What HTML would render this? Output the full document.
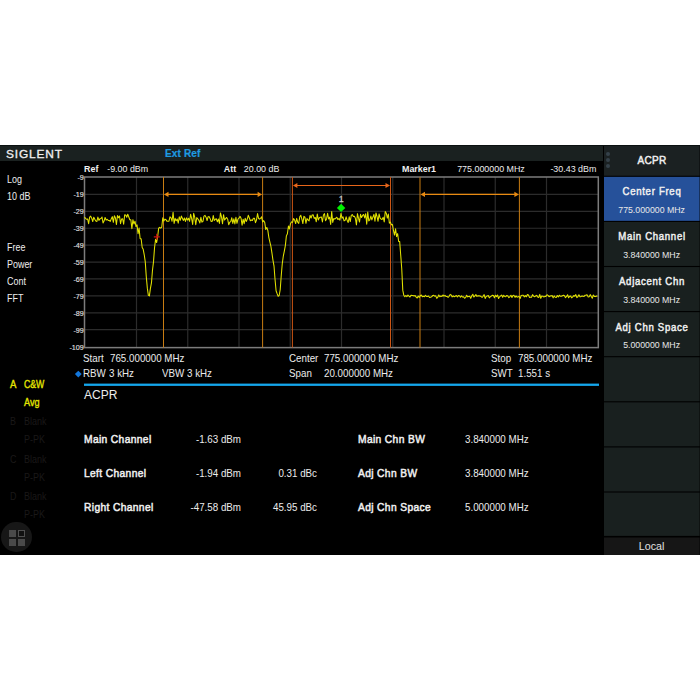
<!DOCTYPE html>
<html><head><meta charset="utf-8"><style>
html,body{margin:0;padding:0;background:#fff;width:700px;height:700px;overflow:hidden;position:relative}
.t{position:absolute;white-space:nowrap;font-family:"Liberation Sans", sans-serif}
</style></head><body>
<div style="position:absolute;left:0px;top:145px;width:700px;height:410px;background:#000;"></div>
<div style="position:absolute;left:0px;top:145px;width:603px;height:15.6px;background:#1a2120;"></div>
<div class="t" style="left:5.70px;top:148.65px;font-size:11.4px;line-height:11.4px;color:#f0f0f0;font-weight:normal;letter-spacing:0.8px;-webkit-text-stroke:0.3px #f0f0f0;transform:scaleX(1.045);transform-origin:0 0;">SIGLENT</div>
<div class="t" style="left:165.00px;top:148.11px;font-size:10.8px;line-height:10.8px;color:#1e9be2;font-weight:bold;letter-spacing:0.15px;-webkit-text-stroke:0.2px #1e9be2;transform:scaleX(0.93);transform-origin:0 0;">Ext Ref</div>
<svg style="position:absolute;left:0;top:0" width="700" height="700">
<rect x="604" y="145" width="95.6" height="30.75" fill="#1b2122"/>
<rect x="604" y="176.85" width="95.6" height="44.00" fill="#26519a"/>
<rect x="604" y="221.95" width="95.6" height="44.00" fill="#19201f"/>
<rect x="604" y="267.05" width="95.6" height="44.00" fill="#19201f"/>
<rect x="604" y="312.15" width="95.6" height="44.00" fill="#19201f"/>
<rect x="604" y="357.25" width="95.6" height="44.00" fill="#19201f"/>
<rect x="604" y="402.35" width="95.6" height="44.00" fill="#19201f"/>
<rect x="604" y="447.45" width="95.6" height="44.00" fill="#19201f"/>
<rect x="604" y="492.55" width="95.6" height="43.35" fill="#19201f"/>
<rect x="604" y="537.5" width="95.6" height="17.5" fill="#161616"/>
<rect x="0" y="145" width="700" height="1" fill="#0b1111"/>
</svg>
<div style="position:absolute;left:606.10px;top:151.60px;width:4.4px;height:4.4px;border-radius:50%;background:#35414a"></div>
<div style="position:absolute;left:606.10px;top:157.80px;width:4.4px;height:4.4px;border-radius:50%;background:#35414a"></div>
<div style="position:absolute;left:606.10px;top:163.80px;width:4.4px;height:4.4px;border-radius:50%;background:#35414a"></div>
<div class="t" style="left:451.60px;width:400px;text-align:center;top:156.20px;font-size:10.4px;line-height:10.4px;color:#f0f0f0;font-weight:normal;letter-spacing:0.3px;-webkit-text-stroke:0.45px #f0f0f0;transform:scaleX(0.97);transform-origin:200px 0;">ACPR</div>
<div class="t" style="left:451.60px;width:400px;text-align:center;top:187.27px;font-size:10.2px;line-height:10.2px;color:#f0f0f0;font-weight:normal;letter-spacing:0.75px;-webkit-text-stroke:0.45px #f0f0f0;transform:scaleX(0.94);transform-origin:200px 0;">Center Freq</div>
<div class="t" style="left:451.60px;width:400px;text-align:center;top:205.59px;font-size:8.75px;line-height:8.75px;color:#e8e8e8;font-weight:normal;">775.000000 MHz</div>
<div class="t" style="left:451.60px;width:400px;text-align:center;top:232.37px;font-size:10.2px;line-height:10.2px;color:#f0f0f0;font-weight:normal;letter-spacing:0.75px;-webkit-text-stroke:0.45px #f0f0f0;transform:scaleX(0.94);transform-origin:200px 0;">Main Channel</div>
<div class="t" style="left:451.60px;width:400px;text-align:center;top:250.69px;font-size:8.75px;line-height:8.75px;color:#e8e8e8;font-weight:normal;">3.840000 MHz</div>
<div class="t" style="left:451.60px;width:400px;text-align:center;top:277.47px;font-size:10.2px;line-height:10.2px;color:#f0f0f0;font-weight:normal;letter-spacing:0.75px;-webkit-text-stroke:0.45px #f0f0f0;transform:scaleX(0.94);transform-origin:200px 0;">Adjacent Chn</div>
<div class="t" style="left:451.60px;width:400px;text-align:center;top:295.79px;font-size:8.75px;line-height:8.75px;color:#e8e8e8;font-weight:normal;">3.840000 MHz</div>
<div class="t" style="left:451.60px;width:400px;text-align:center;top:322.57px;font-size:10.2px;line-height:10.2px;color:#f0f0f0;font-weight:normal;letter-spacing:0.75px;-webkit-text-stroke:0.45px #f0f0f0;transform:scaleX(0.94);transform-origin:200px 0;">Adj Chn Space</div>
<div class="t" style="left:451.60px;width:400px;text-align:center;top:340.89px;font-size:8.75px;line-height:8.75px;color:#e8e8e8;font-weight:normal;">5.000000 MHz</div>
<div class="t" style="left:451.60px;width:400px;text-align:center;top:540.94px;font-size:10.7px;line-height:10.7px;color:#e0e0e0;font-weight:normal;">Local</div>
<div class="t" style="left:6.60px;top:175.10px;font-size:10.4px;line-height:10.4px;color:#eeeeee;font-weight:normal;transform:scaleX(0.86);transform-origin:0 0;">Log</div>
<div class="t" style="left:6.60px;top:191.50px;font-size:10.4px;line-height:10.4px;color:#eeeeee;font-weight:normal;transform:scaleX(0.86);transform-origin:0 0;">10 dB</div>
<div class="t" style="left:6.60px;top:243.10px;font-size:10.4px;line-height:10.4px;color:#eeeeee;font-weight:normal;transform:scaleX(0.86);transform-origin:0 0;">Free</div>
<div class="t" style="left:6.60px;top:259.90px;font-size:10.4px;line-height:10.4px;color:#eeeeee;font-weight:normal;transform:scaleX(0.86);transform-origin:0 0;">Power</div>
<div class="t" style="left:6.60px;top:276.80px;font-size:10.4px;line-height:10.4px;color:#eeeeee;font-weight:normal;transform:scaleX(0.86);transform-origin:0 0;">Cont</div>
<div class="t" style="left:6.60px;top:294.00px;font-size:10.4px;line-height:10.4px;color:#eeeeee;font-weight:normal;transform:scaleX(0.86);transform-origin:0 0;">FFT</div>
<div class="t" style="left:9.90px;top:378.83px;font-size:10.6px;line-height:10.6px;color:#e6e600;font-weight:normal;-webkit-text-stroke:0.35px #e6e600;transform:scaleX(0.9);transform-origin:0 0;">A</div>
<div class="t" style="left:23.80px;top:378.83px;font-size:10.6px;line-height:10.6px;color:#e6e600;font-weight:normal;-webkit-text-stroke:0.35px #e6e600;transform:scaleX(0.82);transform-origin:0 0;">C&amp;W</div>
<div class="t" style="left:23.80px;top:396.53px;font-size:10.6px;line-height:10.6px;color:#e6e600;font-weight:normal;-webkit-text-stroke:0.35px #e6e600;transform:scaleX(0.86);transform-origin:0 0;">Avg</div>
<div class="t" style="left:10.20px;top:417.20px;font-size:10.4px;line-height:10.4px;color:#1a1818;font-weight:normal;transform:scaleX(0.86);transform-origin:0 0;">B</div>
<div class="t" style="left:23.80px;top:417.20px;font-size:10.4px;line-height:10.4px;color:#1a1818;font-weight:normal;transform:scaleX(0.86);transform-origin:0 0;">Blank</div>
<div class="t" style="left:23.80px;top:435.00px;font-size:10.4px;line-height:10.4px;color:#1a1818;font-weight:normal;transform:scaleX(0.86);transform-origin:0 0;">P-PK</div>
<div class="t" style="left:10.20px;top:454.70px;font-size:10.4px;line-height:10.4px;color:#1a1818;font-weight:normal;transform:scaleX(0.86);transform-origin:0 0;">C</div>
<div class="t" style="left:23.80px;top:454.70px;font-size:10.4px;line-height:10.4px;color:#1a1818;font-weight:normal;transform:scaleX(0.86);transform-origin:0 0;">Blank</div>
<div class="t" style="left:23.80px;top:472.50px;font-size:10.4px;line-height:10.4px;color:#1a1818;font-weight:normal;transform:scaleX(0.86);transform-origin:0 0;">P-PK</div>
<div class="t" style="left:10.20px;top:492.30px;font-size:10.4px;line-height:10.4px;color:#1a1818;font-weight:normal;transform:scaleX(0.86);transform-origin:0 0;">D</div>
<div class="t" style="left:23.80px;top:492.30px;font-size:10.4px;line-height:10.4px;color:#1a1818;font-weight:normal;transform:scaleX(0.86);transform-origin:0 0;">Blank</div>
<div class="t" style="left:23.80px;top:510.10px;font-size:10.4px;line-height:10.4px;color:#1a1818;font-weight:normal;transform:scaleX(0.86);transform-origin:0 0;">P-PK</div>
<div style="position:absolute;left:1.4px;top:522.1px;width:30.4px;height:30.4px;border-radius:50%;background:#171717"></div>
<div style="position:absolute;left:8.9px;top:529.9px;width:7px;height:7px;background:#4a4a4a"></div>
<div style="position:absolute;left:18.3px;top:529.9px;width:4.8px;height:4.8px;border:1.1px solid #505050;background:#111"></div>
<div style="position:absolute;left:8.9px;top:539.1px;width:7px;height:7px;background:#4a4a4a"></div>
<div style="position:absolute;left:18.4px;top:539.1px;width:7px;height:7px;background:#4a4a4a"></div>
<div class="t" style="left:84.10px;top:164.57px;font-size:8.9px;line-height:8.9px;color:#f0f0f0;font-weight:bold;">Ref</div>
<div class="t" style="left:107.20px;top:164.57px;font-size:8.9px;line-height:8.9px;color:#ececec;font-weight:normal;">-9.00 dBm</div>
<div class="t" style="left:223.80px;top:164.57px;font-size:8.9px;line-height:8.9px;color:#f0f0f0;font-weight:bold;">Att</div>
<div class="t" style="left:243.80px;top:164.57px;font-size:8.9px;line-height:8.9px;color:#ececec;font-weight:normal;">20.00 dB</div>
<div class="t" style="left:402.00px;top:164.57px;font-size:8.9px;line-height:8.9px;color:#f0f0f0;font-weight:bold;">Marker1</div>
<div class="t" style="left:457.20px;top:164.57px;font-size:8.9px;line-height:8.9px;color:#ececec;font-weight:normal;">775.000000 MHz</div>
<div class="t" style="left:196.30px;width:400px;text-align:right;top:164.57px;font-size:8.9px;line-height:8.9px;color:#ececec;font-weight:normal;">-30.43 dBm</div>
<svg style="position:absolute;left:0;top:0" width="700" height="700">
<line x1="136.50" y1="177.0" x2="136.50" y2="347.6" stroke="#2c2c2c" stroke-width="1.2"/>
<line x1="84.5" y1="194.41" x2="598.3" y2="194.41" stroke="#2c2c2c" stroke-width="1.2"/>
<line x1="187.75" y1="177.0" x2="187.75" y2="347.6" stroke="#2c2c2c" stroke-width="1.2"/>
<line x1="84.5" y1="211.32" x2="598.3" y2="211.32" stroke="#2c2c2c" stroke-width="1.2"/>
<line x1="239.00" y1="177.0" x2="239.00" y2="347.6" stroke="#2c2c2c" stroke-width="1.2"/>
<line x1="84.5" y1="228.23" x2="598.3" y2="228.23" stroke="#2c2c2c" stroke-width="1.2"/>
<line x1="290.25" y1="177.0" x2="290.25" y2="347.6" stroke="#2c2c2c" stroke-width="1.2"/>
<line x1="84.5" y1="245.14" x2="598.3" y2="245.14" stroke="#2c2c2c" stroke-width="1.2"/>
<line x1="341.50" y1="177.0" x2="341.50" y2="347.6" stroke="#2c2c2c" stroke-width="1.2"/>
<line x1="84.5" y1="262.05" x2="598.3" y2="262.05" stroke="#2c2c2c" stroke-width="1.2"/>
<line x1="392.75" y1="177.0" x2="392.75" y2="347.6" stroke="#2c2c2c" stroke-width="1.2"/>
<line x1="84.5" y1="278.96" x2="598.3" y2="278.96" stroke="#2c2c2c" stroke-width="1.2"/>
<line x1="444.00" y1="177.0" x2="444.00" y2="347.6" stroke="#2c2c2c" stroke-width="1.2"/>
<line x1="84.5" y1="295.87" x2="598.3" y2="295.87" stroke="#2c2c2c" stroke-width="1.2"/>
<line x1="495.25" y1="177.0" x2="495.25" y2="347.6" stroke="#2c2c2c" stroke-width="1.2"/>
<line x1="84.5" y1="312.78" x2="598.3" y2="312.78" stroke="#2c2c2c" stroke-width="1.2"/>
<line x1="546.50" y1="177.0" x2="546.50" y2="347.6" stroke="#2c2c2c" stroke-width="1.2"/>
<line x1="84.5" y1="329.69" x2="598.3" y2="329.69" stroke="#2c2c2c" stroke-width="1.2"/>
<rect x="84.5" y="177.0" width="513.8" height="170.60000000000002" fill="none" stroke="#7c7c7c" stroke-width="1.5"/>
<text x="83.8" y="179.50" text-anchor="end" font-family='"Liberation Sans", sans-serif' font-size="7.2" fill="#e0e0e0" stroke="#e0e0e0" stroke-width="0.12">-9</text>
<text x="83.8" y="196.54" text-anchor="end" font-family='"Liberation Sans", sans-serif' font-size="7.2" fill="#e0e0e0" stroke="#e0e0e0" stroke-width="0.12">-19</text>
<text x="83.8" y="213.58" text-anchor="end" font-family='"Liberation Sans", sans-serif' font-size="7.2" fill="#e0e0e0" stroke="#e0e0e0" stroke-width="0.12">-29</text>
<text x="83.8" y="230.62" text-anchor="end" font-family='"Liberation Sans", sans-serif' font-size="7.2" fill="#e0e0e0" stroke="#e0e0e0" stroke-width="0.12">-39</text>
<text x="83.8" y="247.66" text-anchor="end" font-family='"Liberation Sans", sans-serif' font-size="7.2" fill="#e0e0e0" stroke="#e0e0e0" stroke-width="0.12">-49</text>
<text x="83.8" y="264.70" text-anchor="end" font-family='"Liberation Sans", sans-serif' font-size="7.2" fill="#e0e0e0" stroke="#e0e0e0" stroke-width="0.12">-59</text>
<text x="83.8" y="281.74" text-anchor="end" font-family='"Liberation Sans", sans-serif' font-size="7.2" fill="#e0e0e0" stroke="#e0e0e0" stroke-width="0.12">-69</text>
<text x="83.8" y="298.78" text-anchor="end" font-family='"Liberation Sans", sans-serif' font-size="7.2" fill="#e0e0e0" stroke="#e0e0e0" stroke-width="0.12">-79</text>
<text x="83.8" y="315.82" text-anchor="end" font-family='"Liberation Sans", sans-serif' font-size="7.2" fill="#e0e0e0" stroke="#e0e0e0" stroke-width="0.12">-89</text>
<text x="83.8" y="332.86" text-anchor="end" font-family='"Liberation Sans", sans-serif' font-size="7.2" fill="#e0e0e0" stroke="#e0e0e0" stroke-width="0.12">-99</text>
<text x="83.8" y="349.90" text-anchor="end" font-family='"Liberation Sans", sans-serif' font-size="7.2" fill="#e0e0e0" stroke="#e0e0e0" stroke-width="0.12">-109</text>
<line x1="163.5" y1="177.0" x2="163.5" y2="347.6" stroke="#c87c12" stroke-width="1.0"/>
<line x1="262.6" y1="177.0" x2="262.6" y2="347.6" stroke="#c87c12" stroke-width="1.0"/>
<line x1="292.4" y1="177.0" x2="292.4" y2="347.6" stroke="#cc5614" stroke-width="1.0"/>
<line x1="390.5" y1="177.0" x2="390.5" y2="347.6" stroke="#cc5614" stroke-width="1.0"/>
<line x1="420.0" y1="177.0" x2="420.0" y2="347.6" stroke="#c87c12" stroke-width="1.0"/>
<line x1="519.4" y1="177.0" x2="519.4" y2="347.6" stroke="#c87c12" stroke-width="1.0"/>
<line x1="166.5" y1="194.4" x2="259.6" y2="194.4" stroke="#e88a12" stroke-width="1.2"/>
<path d="M164.0,194.4 L168.5,191.8 L168.5,197.0 Z" fill="#e88a12"/>
<path d="M262.1,194.4 L257.6,191.8 L257.6,197.0 Z" fill="#e88a12"/>
<line x1="295.4" y1="185.5" x2="387.5" y2="185.5" stroke="#e8661a" stroke-width="1.2"/>
<path d="M292.9,185.5 L297.4,182.9 L297.4,188.1 Z" fill="#e8661a"/>
<path d="M390.0,185.5 L385.5,182.9 L385.5,188.1 Z" fill="#e8661a"/>
<line x1="423.0" y1="194.4" x2="516.4" y2="194.4" stroke="#e88a12" stroke-width="1.2"/>
<path d="M420.5,194.4 L425.0,191.8 L425.0,197.0 Z" fill="#e88a12"/>
<path d="M518.9,194.4 L514.4,191.8 L514.4,197.0 Z" fill="#e88a12"/>
<polyline points="84.50,216.94 85.53,218.42 86.56,219.30 87.59,218.96 88.62,223.75 89.65,217.09 90.68,216.17 91.71,218.21 92.74,221.57 93.77,217.23 94.80,219.30 95.83,221.11 96.86,221.49 97.89,217.05 98.92,220.37 99.95,218.86 100.98,218.48 102.01,216.98 103.04,222.97 104.07,221.09 105.10,217.42 106.13,220.09 107.16,219.23 108.19,220.46 109.22,220.52 110.25,221.36 111.28,218.83 112.31,216.63 113.34,222.33 114.37,215.83 115.40,217.71 116.43,224.55 117.46,215.59 118.49,217.77 119.52,215.99 120.55,223.74 121.58,219.01 122.61,218.77 123.64,224.11 124.67,214.89 125.70,214.98 126.73,217.28 127.76,214.26 128.79,217.00 129.82,219.71 130.85,219.83 131.88,228.81 132.91,219.68 133.94,223.97 134.97,221.18 136.00,226.58 137.03,224.83 138.06,233.72 139.09,228.06 140.12,238.76 141.15,238.70 142.18,247.54 143.21,249.28 144.24,254.78 145.27,261.90 146.30,276.89 147.33,288.13 148.36,295.38 149.39,295.90 150.42,288.41 151.45,282.96 152.48,270.30 153.51,261.64 154.54,247.75 155.57,239.26 156.60,242.54 157.63,236.86 158.66,228.18 159.69,227.29 160.72,228.19 161.75,227.08 162.78,217.73 163.81,221.12 164.84,219.16 165.87,219.60 166.90,221.15 167.93,221.28 168.96,221.14 169.99,216.88 171.02,217.96 172.05,221.23 173.08,212.30 174.11,223.40 175.14,218.34 176.17,220.83 177.20,218.95 178.23,223.10 179.26,216.79 180.29,220.32 181.32,216.01 182.35,218.23 183.38,220.41 184.41,217.98 185.44,221.38 186.47,217.87 187.50,220.09 188.53,218.21 189.56,221.31 190.59,214.21 191.62,218.30 192.65,224.51 193.68,213.29 194.71,217.23 195.74,224.80 196.77,217.64 197.80,218.78 198.83,220.36 199.86,222.94 200.89,217.35 201.92,222.22 202.95,221.37 203.98,216.17 205.01,215.40 206.04,217.20 207.07,220.54 208.10,216.75 209.13,216.63 210.16,218.68 211.19,221.53 212.22,221.29 213.25,215.61 214.28,220.53 215.31,219.27 216.34,218.82 217.37,221.76 218.40,219.04 219.43,223.36 220.46,212.92 221.49,216.83 222.52,223.80 223.55,214.68 224.58,220.03 225.61,218.61 226.64,217.46 227.67,219.19 228.70,224.75 229.73,222.20 230.76,221.66 231.79,217.75 232.82,223.39 233.85,218.77 234.88,223.93 235.91,217.26 236.94,223.32 237.97,219.07 239.00,218.19 240.03,216.36 241.06,218.22 242.09,225.12 243.12,219.21 244.15,223.63 245.18,218.23 246.21,221.41 247.24,219.23 248.27,215.31 249.30,217.77 250.33,220.76 251.36,220.04 252.39,220.44 253.42,218.18 254.45,218.18 255.48,222.65 256.51,219.98 257.54,213.58 258.57,218.46 259.60,219.18 260.63,218.35 261.66,216.78 262.69,222.06 263.72,220.66 264.75,222.61 265.78,229.57 266.81,227.43 267.84,230.42 268.87,237.61 269.90,242.20 270.93,246.46 271.96,253.20 272.99,260.33 274.02,266.20 275.05,279.48 276.08,290.80 277.11,293.65 278.14,296.27 279.17,295.47 280.20,289.74 281.23,275.78 282.26,263.74 283.29,256.23 284.32,251.08 285.35,245.60 286.38,235.89 287.41,233.74 288.44,225.96 289.47,228.97 290.50,223.64 291.53,221.85 292.56,222.40 293.59,218.59 294.62,220.04 295.65,223.57 296.68,218.40 297.71,222.21 298.74,223.42 299.77,216.85 300.80,215.27 301.83,218.95 302.86,223.56 303.89,216.31 304.92,217.20 305.95,223.29 306.98,218.50 308.01,220.02 309.04,220.85 310.07,215.38 311.10,218.01 312.13,214.99 313.16,214.77 314.19,218.41 315.22,217.44 316.25,221.77 317.28,214.04 318.31,219.95 319.34,217.72 320.37,217.28 321.40,216.99 322.43,221.91 323.46,215.03 324.49,213.65 325.52,220.77 326.55,218.89 327.58,213.23 328.61,218.91 329.64,217.15 330.67,224.38 331.70,211.59 332.73,222.42 333.76,218.57 334.79,219.02 335.82,218.09 336.85,217.26 337.88,219.55 338.91,218.58 339.94,220.10 340.97,213.25 342.00,218.14 343.03,216.84 344.06,220.87 345.09,220.33 346.12,216.79 347.15,220.37 348.18,222.51 349.21,216.86 350.24,221.58 351.27,215.42 352.30,214.54 353.33,216.46 354.36,216.17 355.39,218.29 356.42,224.85 357.45,213.65 358.48,218.20 359.51,222.05 360.54,214.36 361.57,217.55 362.60,215.46 363.63,214.44 364.66,217.92 365.69,213.74 366.72,224.13 367.75,212.12 368.78,220.86 369.81,219.96 370.84,216.09 371.87,219.89 372.90,217.07 373.93,214.38 374.96,221.16 375.99,212.94 377.02,216.56 378.05,221.27 379.08,213.94 380.11,218.18 381.14,219.22 382.17,219.37 383.20,217.24 384.23,221.86 385.26,211.60 386.29,213.18 387.32,218.10 388.35,214.09 389.38,223.17 390.41,222.08 391.44,224.86 392.47,224.56 393.50,230.74 394.53,235.06 395.56,228.74 396.59,236.60 397.62,233.64 398.65,241.47 399.68,241.61 400.71,254.96 401.74,268.73 402.77,290.15 403.80,295.29 404.83,296.71 405.86,295.52 406.89,296.68 407.92,295.03 408.95,296.10 409.98,296.98 411.01,295.20 412.04,295.60 413.07,295.57 414.10,295.96 415.13,295.50 416.16,297.18 417.19,297.98 418.22,295.95 419.25,297.34 420.28,295.75 421.31,295.06 422.34,296.65 423.37,296.24 424.40,296.76 425.43,295.23 426.46,296.50 427.49,296.54 428.52,295.95 429.55,297.48 430.58,297.25 431.61,296.85 432.64,295.55 433.67,295.28 434.70,296.17 435.73,295.86 436.76,298.38 437.79,297.16 438.82,294.90 439.85,296.70 440.88,296.07 441.91,296.50 442.94,294.97 443.97,296.09 445.00,295.32 446.03,296.53 447.06,296.48 448.09,297.44 449.12,296.25 450.15,294.42 451.18,295.01 452.21,296.90 453.24,295.88 454.27,296.77 455.30,296.18 456.33,295.50 457.36,297.06 458.39,295.62 459.42,295.77 460.45,297.21 461.48,295.90 462.51,297.04 463.54,296.80 464.57,298.19 465.60,297.64 466.63,295.22 467.66,296.86 468.69,296.53 469.72,296.23 470.75,298.39 471.78,295.70 472.81,294.24 473.84,297.06 474.87,295.98 475.90,294.59 476.93,296.41 477.96,295.79 478.99,295.86 480.02,296.04 481.05,296.57 482.08,297.43 483.11,296.25 484.14,294.59 485.17,298.38 486.20,296.59 487.23,295.90 488.26,295.56 489.29,297.88 490.32,296.72 491.35,296.15 492.38,295.20 493.41,295.60 494.44,297.74 495.47,295.20 496.50,296.62 497.53,294.97 498.56,298.50 499.59,296.82 500.62,295.95 501.65,295.03 502.68,297.33 503.71,295.31 504.74,296.48 505.77,296.70 506.80,295.44 507.83,295.98 508.86,297.66 509.89,296.53 510.92,295.23 511.95,297.44 512.98,295.43 514.01,295.38 515.04,297.35 516.07,295.93 517.10,297.17 518.13,296.82 519.16,296.44 520.19,298.44 521.22,295.41 522.25,295.26 523.28,295.22 524.31,296.88 525.34,295.64 526.37,296.81 527.40,294.43 528.43,295.07 529.46,297.36 530.49,297.21 531.52,297.28 532.55,294.65 533.58,296.12 534.61,296.81 535.64,295.96 536.67,295.35 537.70,296.97 538.73,297.56 539.76,294.41 540.79,298.36 541.82,296.03 542.85,296.21 543.88,297.04 544.91,296.32 545.94,296.36 546.97,294.69 548.00,295.39 549.03,296.76 550.06,295.97 551.09,295.88 552.12,295.55 553.15,297.87 554.18,295.88 555.21,297.29 556.24,297.47 557.27,295.53 558.30,297.07 559.33,295.22 560.36,296.31 561.39,296.31 562.42,295.74 563.45,295.18 564.48,295.73 565.51,297.65 566.54,296.43 567.57,294.75 568.60,297.71 569.63,296.35 570.66,296.11 571.69,297.83 572.72,296.95 573.75,295.58 574.78,296.17 575.81,294.57 576.84,297.59 577.87,296.73 578.90,294.83 579.93,296.62 580.96,296.69 581.99,295.94 583.02,296.18 584.05,296.47 585.08,295.19 586.11,295.13 587.14,294.86 588.17,296.92 589.20,296.70 590.23,294.61 591.26,296.43 592.29,298.27 593.32,294.95 594.35,296.38 595.38,296.60 596.41,296.07 597.44,296.34" fill="none" stroke="#e2e200" stroke-width="1.05" stroke-linejoin="round"/>
<path d="M153.8,236.8 L159.8,236.8 M156.8,233.8 L156.8,239.8" stroke="#c81010" stroke-width="1.3"/>
<path d="M341.1,203.7 L345.3,207.9 L341.1,212.1 L336.9,207.9 Z" fill="#00f000"/>
<text x="341.1" y="202.2" text-anchor="middle" font-family='"Liberation Sans", sans-serif' font-size="8.9" fill="#c4c4c4" stroke="#c4c4c4" stroke-width="0.3">1</text>
<path d="M78.3,370.7 L81.7,374.1 L78.3,377.5 L74.9,374.1 Z" fill="#1276dc"/>
<rect x="84" y="383.6" width="515" height="2.3" fill="#14a6ec"/>
</svg>
<div class="t" style="left:83.40px;top:353.46px;font-size:10.8px;line-height:10.8px;color:#ececec;font-weight:normal;transform:scaleX(0.905);transform-origin:0 0;">Start</div>
<div class="t" style="left:109.60px;top:353.46px;font-size:10.8px;line-height:10.8px;color:#ececec;font-weight:normal;transform:scaleX(0.905);transform-origin:0 0;">765.000000 MHz</div>
<div class="t" style="left:83.40px;top:368.36px;font-size:10.8px;line-height:10.8px;color:#ececec;font-weight:normal;transform:scaleX(0.905);transform-origin:0 0;">RBW</div>
<div class="t" style="left:109.00px;top:368.36px;font-size:10.8px;line-height:10.8px;color:#ececec;font-weight:normal;transform:scaleX(0.905);transform-origin:0 0;">3 kHz</div>
<div class="t" style="left:161.80px;top:368.36px;font-size:10.8px;line-height:10.8px;color:#ececec;font-weight:normal;transform:scaleX(0.905);transform-origin:0 0;">VBW</div>
<div class="t" style="left:187.40px;top:368.36px;font-size:10.8px;line-height:10.8px;color:#ececec;font-weight:normal;transform:scaleX(0.905);transform-origin:0 0;">3 kHz</div>
<div class="t" style="left:288.90px;top:353.46px;font-size:10.8px;line-height:10.8px;color:#ececec;font-weight:normal;transform:scaleX(0.905);transform-origin:0 0;">Center</div>
<div class="t" style="left:324.40px;top:353.46px;font-size:10.8px;line-height:10.8px;color:#ececec;font-weight:normal;transform:scaleX(0.905);transform-origin:0 0;">775.000000 MHz</div>
<div class="t" style="left:288.90px;top:368.36px;font-size:10.8px;line-height:10.8px;color:#ececec;font-weight:normal;transform:scaleX(0.905);transform-origin:0 0;">Span</div>
<div class="t" style="left:324.40px;top:368.36px;font-size:10.8px;line-height:10.8px;color:#ececec;font-weight:normal;transform:scaleX(0.905);transform-origin:0 0;">20.000000 MHz</div>
<div class="t" style="left:491.00px;top:353.46px;font-size:10.8px;line-height:10.8px;color:#ececec;font-weight:normal;transform:scaleX(0.905);transform-origin:0 0;">Stop</div>
<div class="t" style="left:517.50px;top:353.46px;font-size:10.8px;line-height:10.8px;color:#ececec;font-weight:normal;transform:scaleX(0.905);transform-origin:0 0;">785.000000 MHz</div>
<div class="t" style="left:491.00px;top:368.36px;font-size:10.8px;line-height:10.8px;color:#ececec;font-weight:normal;transform:scaleX(0.905);transform-origin:0 0;">SWT</div>
<div class="t" style="left:517.50px;top:368.36px;font-size:10.8px;line-height:10.8px;color:#ececec;font-weight:normal;transform:scaleX(0.905);transform-origin:0 0;">1.551 s</div>
<div class="t" style="left:84.00px;top:388.84px;font-size:12.0px;line-height:12.0px;color:#ececec;font-weight:normal;">ACPR</div>
<div class="t" style="left:84.20px;top:433.72px;font-size:11.2px;line-height:11.2px;color:#f0f0f0;font-weight:normal;letter-spacing:0.4px;-webkit-text-stroke:0.5px #f0f0f0;transform:scaleX(0.915);transform-origin:0 0;">Main Channel</div>
<div class="t" style="left:-159.10px;width:400px;text-align:right;top:434.34px;font-size:10.7px;line-height:10.7px;color:#ececec;font-weight:normal;transform:scaleX(0.915);transform-origin:400px 0;">-1.63 dBm</div>
<div class="t" style="left:84.20px;top:467.82px;font-size:11.2px;line-height:11.2px;color:#f0f0f0;font-weight:normal;letter-spacing:0.4px;-webkit-text-stroke:0.5px #f0f0f0;transform:scaleX(0.915);transform-origin:0 0;">Left Channel</div>
<div class="t" style="left:-159.10px;width:400px;text-align:right;top:468.44px;font-size:10.7px;line-height:10.7px;color:#ececec;font-weight:normal;transform:scaleX(0.915);transform-origin:400px 0;">-1.94 dBm</div>
<div class="t" style="left:-83.40px;width:400px;text-align:right;top:468.44px;font-size:10.7px;line-height:10.7px;color:#ececec;font-weight:normal;transform:scaleX(0.915);transform-origin:400px 0;">0.31 dBc</div>
<div class="t" style="left:84.20px;top:501.82px;font-size:11.2px;line-height:11.2px;color:#f0f0f0;font-weight:normal;letter-spacing:0.4px;-webkit-text-stroke:0.5px #f0f0f0;transform:scaleX(0.915);transform-origin:0 0;">Right Channel</div>
<div class="t" style="left:-159.10px;width:400px;text-align:right;top:502.44px;font-size:10.7px;line-height:10.7px;color:#ececec;font-weight:normal;transform:scaleX(0.915);transform-origin:400px 0;">-47.58 dBm</div>
<div class="t" style="left:-83.40px;width:400px;text-align:right;top:502.44px;font-size:10.7px;line-height:10.7px;color:#ececec;font-weight:normal;transform:scaleX(0.915);transform-origin:400px 0;">45.95 dBc</div>
<div class="t" style="left:357.50px;top:433.72px;font-size:11.2px;line-height:11.2px;color:#f0f0f0;font-weight:normal;letter-spacing:0.4px;-webkit-text-stroke:0.5px #f0f0f0;transform:scaleX(0.915);transform-origin:0 0;">Main Chn BW</div>
<div class="t" style="left:464.60px;top:434.34px;font-size:10.7px;line-height:10.7px;color:#ececec;font-weight:normal;transform:scaleX(0.915);transform-origin:0 0;">3.840000 MHz</div>
<div class="t" style="left:357.50px;top:467.82px;font-size:11.2px;line-height:11.2px;color:#f0f0f0;font-weight:normal;letter-spacing:0.4px;-webkit-text-stroke:0.5px #f0f0f0;transform:scaleX(0.915);transform-origin:0 0;">Adj Chn BW</div>
<div class="t" style="left:464.60px;top:468.44px;font-size:10.7px;line-height:10.7px;color:#ececec;font-weight:normal;transform:scaleX(0.915);transform-origin:0 0;">3.840000 MHz</div>
<div class="t" style="left:357.50px;top:501.82px;font-size:11.2px;line-height:11.2px;color:#f0f0f0;font-weight:normal;letter-spacing:0.4px;-webkit-text-stroke:0.5px #f0f0f0;transform:scaleX(0.915);transform-origin:0 0;">Adj Chn Space</div>
<div class="t" style="left:464.60px;top:502.44px;font-size:10.7px;line-height:10.7px;color:#ececec;font-weight:normal;transform:scaleX(0.915);transform-origin:0 0;">5.000000 MHz</div>
</body></html>
